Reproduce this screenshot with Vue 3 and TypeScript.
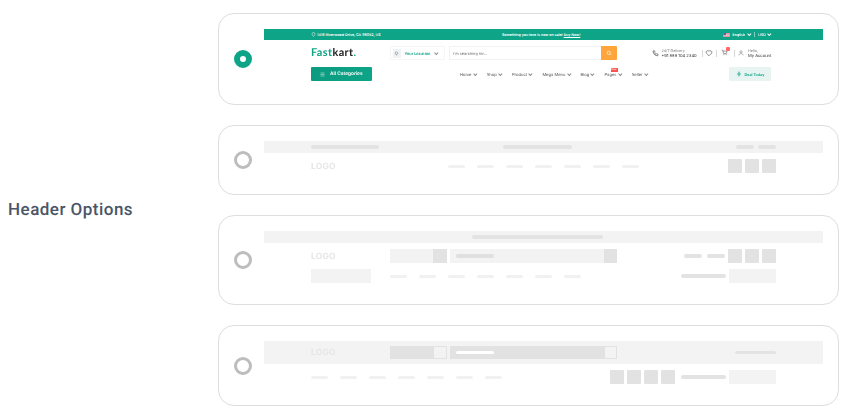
<script setup lang="ts">
const navItems: string[] = ['Home', 'Shop', 'Product', 'Mega Menu', 'Blog', 'Pages', 'Seller']
const lines: number[] = [1, 2, 3, 4, 5, 6, 7]
</script>

<template>
  <main class="page">
    <h2 class="label">Header Options</h2>
    <div class="cards">
      <section class="card">
        <span class="radio radio-on"></span>
        <div class="preview preview-live">
          <div class="live-bar">
            <span class="address">
              <svg class="ic-pin" viewBox="0 0 10 10"><path d="M5 1a3 3 0 0 1 3 3c0 2-3 5-3 5S2 6 2 4a3 3 0 0 1 3-3z" fill="none" stroke="#fff" stroke-width="1"/></svg>
              1418 Riverwood Drive, CA 96052, US
            </span>
            <span class="promo">Something you love is now on sale! <u>Buy Now!</u></span>
            <span class="locale">
              <svg class="flag" viewBox="0 0 8 5"><rect width="8" height="5" fill="#e8e8f0"/><path d="M0 .5h8M0 2.5h8M0 4.5h8" stroke="#e2526a" stroke-width=".8"/><rect width="3.4" height="2.6" fill="#5a64a8"/></svg>
              English <i class="chev chev-w"></i><b class="locale-sep"></b>USD <i class="chev chev-w"></i>
            </span>
          </div>
          <div class="live-main">
            <span class="brand"><em>Fast</em>kart<em>.</em></span>
            <div class="location">
              <span class="loc-ic"><svg viewBox="0 0 10 10"><circle cx="5" cy="4.5" r="2.6" fill="none" stroke="#7a8090" stroke-width="1.2"/><path d="M5 7v2" stroke="#7a8090"/></svg></span>
              <span class="loc-text">Your Location</span>
              <i class="chev"></i>
            </div>
            <div class="search">
              <span class="search-text">I'm searching for...</span>
              <span class="search-btn"><svg viewBox="0 0 10 10"><circle cx="4.6" cy="4.6" r="2.7" fill="none" stroke="#fff" stroke-width="1"/><path d="M6.6 6.6l1.8 1.8" stroke="#fff"/></svg></span>
            </div>
            <div class="tools">
              <svg class="ic-phone" viewBox="0 0 10 10"><path d="M1.5 1.5l2-.5 1 2.2-1 .8c.4 1 1.2 1.8 2.2 2.2l.8-1 2.2 1-.5 2C4.500 8.500 1.500 5.500 1.500 1.500z" fill="none" stroke="#444" stroke-width=".9"/></svg>
              <span class="two-line phone-text"><small>24/7 Delivery</small><span>+91 888 104 2340</span></span>
              <b class="sep sep-a"></b>
              <svg class="ic-heart" viewBox="0 0 10 10"><path d="M5 8.500L1.500 5A2.100 2.100 0 0 1 5 2.800 2.100 2.100 0 0 1 8.500 5z" fill="none" stroke="#555" stroke-width=".8"/></svg>
              <b class="sep sep-b"></b>
              <span class="cart">
                <svg viewBox="0 0 10 10"><path d="M1 1.500h1.500l1.200 5h4l1-3.500H3" fill="none" stroke="#555" stroke-width=".8"/><circle cx="4.200" cy="8.300" r=".7" fill="#555"/><circle cx="7.300" cy="8.300" r=".7" fill="#555"/></svg>
                <i class="cart-badge"></i>
              </span>
              <b class="sep sep-c"></b>
              <svg class="ic-user" viewBox="0 0 10 10"><circle cx="5" cy="3.200" r="1.900" fill="none" stroke="#666" stroke-width=".8"/><path d="M1.500 9c.3-2 1.700-3 3.500-3s3.200 1 3.500 3" fill="none" stroke="#666" stroke-width=".8"/></svg>
              <span class="two-line account"><small>Hello,</small><span>My Account</span></span>
            </div>
          </div>
          <div class="live-nav">
            <span class="all-cats">
              <svg viewBox="0 0 10 10"><path d="M1 2h8M1 5h8M1 8h8" stroke="#d9f1ec" stroke-width="1"/></svg>
              All Categories
            </span>
            <nav class="nav">
              <span v-for="item in navItems" :key="item" class="nav-item">
                {{ item }} <i class="chev"></i>
                <i v-if="item === 'Pages'" class="new">New</i>
              </span>
            </nav>
            <span class="deal">
              <svg viewBox="0 0 10 10"><path d="M5 .500v9M1.500 5h7M5 2l-2 3 2 3 2-3z" fill="none" stroke="#0da487" stroke-width=".8"/></svg>
              Deal Today
            </span>
          </div>
        </div>
      </section>

      <section class="card">
        <span class="radio"></span>
        <div class="preview">
          <div class="bar">
            <i class="line w68"></i>
            <i class="line w69 mid-2"></i>
            <i class="line w18 push"></i>
            <i class="line w18 g4"></i>
          </div>
          <div class="row row-first">
            <span class="logo">LOGO</span>
            <div class="nav-lines nav-2"><i v-for="n in lines" :key="n" class="nl"></i></div>
            <div class="squares push"><i class="sq"></i><i class="sq"></i><i class="sq"></i></div>
          </div>
        </div>
      </section>

      <section class="card">
        <span class="radio"></span>
        <div class="preview">
          <div class="bar bar-center"><i class="line w131"></i></div>
          <div class="row row-first">
            <span class="logo logo-col">LOGO</span>
            <div class="sk-search">
              <span class="sk-left"></span><span class="sk-tag"></span>
              <span class="sk-input"><i class="line line-soft w38"></i></span><span class="sk-tag"></span>
            </div>
            <i class="line w18 push"></i>
            <i class="line w18 g5"></i>
            <div class="squares g3"><i class="sq"></i><i class="sq"></i><i class="sq"></i></div>
          </div>
          <div class="row row-next">
            <span class="box box-60"></span>
            <div class="nav-lines nav-3"><i v-for="n in lines" :key="n" class="nl"></i></div>
            <i class="line w45 push"></i>
            <span class="box box-47 g3"></span>
          </div>
        </div>
      </section>

      <section class="card">
        <span class="radio"></span>
        <div class="preview">
          <div class="bar bar-tall">
            <span class="logo logo-col">LOGO</span>
            <div class="sk-search sk-dark">
              <span class="sk-left"></span><span class="sk-tag"></span>
              <span class="sk-input"><i class="line line-white w38"></i></span><span class="sk-tag"></span>
            </div>
            <i class="line w41 push"></i>
          </div>
          <div class="row row-next">
            <div class="nav-lines"><i v-for="n in lines" :key="n" class="nl"></i></div>
            <div class="squares push"><i class="sq"></i><i class="sq"></i><i class="sq"></i><i class="sq"></i></div>
            <i class="line w45 g6"></i>
            <span class="box box-47 g3"></span>
          </div>
        </div>
      </section>
    </div>
  </main>
</template>

<style scoped>
.page {
  width: 849px;
  height: 417px;
  box-sizing: border-box;
  padding: 13px 10px 0 8px;
  display: flex;
  align-items: flex-start;
  font-family: Inter, "Liberation Sans", sans-serif;
  background: #fff;
  text-rendering: geometricPrecision;
}
.label {
  width: 210px;
  margin: 187px 0 0;
  font: 500 17px/20px Roboto, "Liberation Sans", sans-serif;
  letter-spacing: .48px;
  color: #4a5568;
}
.cards { width: 621px; display: flex; flex-direction: column; gap: 20px; }
.card {
  box-sizing: border-box;
  display: flex;
  align-items: center;
  gap: 12px;
  padding: 15px;
  border: 1px solid #dedede;
  border-radius: 16px;
  background: #fff;
}
.radio {
  flex: none;
  box-sizing: border-box;
  width: 18px;
  height: 18px;
  border-radius: 50%;
  border: 3.5px solid #bdbdbd;
  background: #fff;
}
.radio-on { border: 6px solid #0da487; }
.preview { width: 559px; flex: none; padding-bottom: 6px; filter: blur(.3px); }
.preview-live { padding-bottom: 8px; }

/* live header */
.live-bar {
  height: 11px;
  background: #0da487;
  padding: 0 52px 0 47px;
  display: flex;
  align-items: center;
  color: #fff;
  font-size: 3.6px;
  font-weight: 600;
  white-space: nowrap;
}
.address { width: 191px; display: flex; align-items: center; gap: 1px; }
.ic-pin { width: 5px; height: 5px; }
.promo { flex: none; }
.locale { margin-left: auto; display: flex; align-items: center; gap: 1.500px; }
.flag { width: 7px; height: 4px; margin-right: 1px; }
.locale-sep { width: 1px; height: 5px; background: #7fd0c0; margin: 0 2px; }
.chev {
  display: inline-block;
  width: 1.600px;
  height: 1.600px;
  border: solid #888;
  border-width: 0 .4px .4px 0;
  transform: translateY(-.6px) rotate(45deg);
  margin-left: 1px;
}
.chev-w { border-color: #fff; }
.live-main {
  margin-top: 6px;
  height: 14px;
  padding: 0 52px 0 47px;
  display: flex;
  align-items: center;
  white-space: nowrap;
}
.brand {
  width: 79px;
  font: 700 10.900px/14px Lato, Inter, sans-serif;
  letter-spacing: .4px;
  color: #222;
}
.brand em { font-style: normal; color: #0da487; }
.location {
  box-sizing: border-box;
  width: 55px;
  height: 14px;
  border: 1px solid #f6f6f6;
  display: flex;
  align-items: center;
  padding-left: 1.500px;
}
.loc-ic {
  width: 8px;
  height: 9px;
  background: #f0f2f6;
  display: flex;
  align-items: center;
  justify-content: center;
}
.loc-ic svg { width: 5px; height: 5px; }
.loc-text { margin-left: 4px; color: #0da487; font-size: 3.9px; font-weight: 600; }
.location .chev { margin-left: 5px; }
.search {
  box-sizing: border-box;
  margin-left: 4px;
  width: 168px;
  height: 14px;
  border: 1px solid #f2f2f2;
  border-right: 0;
  display: flex;
  align-items: center;
  justify-content: space-between;
  font-size: 3.9px;
  color: #777;
}
.search-text { margin-left: 3px; }
.search-btn {
  width: 16px;
  height: 14px;
  background: #ffa53b;
  border-radius: 0 1px 1px 0;
  display: flex;
  align-items: center;
  justify-content: center;
}
.search-btn svg { width: 6px; height: 6px; }
.tools { margin-left: auto; display: flex; align-items: center; }
.ic-phone { width: 7px; height: 7px; }
.two-line {
  display: flex;
  flex-direction: column;
  font-size: 4.100px;
  line-height: 5.500px;
  color: #333;
  margin-left: 3px;
}
.two-line small { font-size: 3.700px; color: #777; }
.phone-text { width: 35px; }
.sep { width: 1px; height: 7px; background: #d8d8d8; }
.sep-a { margin-left: 5px; }
.ic-heart { width: 8px; height: 8px; margin-left: 2.500px; }
.sep-b { margin-left: 3px; }
.cart { position: relative; width: 8px; height: 8px; margin-left: 4px; }
.cart svg { display: block; width: 7px; height: 7px; }
.cart-badge {
  position: absolute;
  right: -1px;
  top: -2.500px;
  width: 4px;
  height: 4px;
  background: #ff6b6b;
  border-radius: 1px;
}
.sep-c { margin-left: 5px; }
.ic-user { width: 6px; height: 6px; margin-left: 3px; }
.account { width: 23px; margin-left: 4px; }
.live-nav {
  margin-top: 7px;
  height: 14px;
  padding: 0 52px 0 47px;
  display: flex;
  align-items: center;
  white-space: nowrap;
}
.all-cats {
  width: 61px;
  height: 14.500px;
  flex: none;
  box-sizing: border-box;
  padding-left: 9px;
  background: linear-gradient(90deg, #0c9b80, #0da487);
  border-radius: 1px;
  color: #fff;
  font-size: 4.800px;
  font-weight: 600;
  display: flex;
  align-items: center;
  gap: 5px;
}
.all-cats svg { width: 5px; height: 5px; }
.nav {
  margin-left: 88px;
  display: flex;
  gap: 10.500px;
  font-size: 4.100px;
  font-weight: 400;
  color: #555;
}
.nav-item { position: relative; }
.new {
  position: absolute;
  left: 6px;
  top: -4px;
  width: 7px;
  height: 4.500px;
  background: #ff4f4f;
  color: #fff;
  font-size: 2.500px;
  line-height: 4.500px;
  text-align: center;
  font-style: normal;
}
.deal {
  margin-left: auto;
  width: 42px;
  height: 14.500px;
  box-sizing: border-box;
  padding-left: 6.500px;
  background: #e8f4f2;
  border-radius: 1px;
  color: #0da487;
  font-size: 3.700px;
  font-weight: 600;
  display: flex;
  align-items: center;
  gap: 3px;
}
.deal svg { width: 6px; height: 6px; }

/* skeletons */
.bar, .row { display: flex; align-items: center; padding: 0 47px; }
.bar { height: 12px; background: #f3f3f3; }
.bar-center { padding-left: 208px; }
.bar-tall { height: 23px; }
.row { height: 14px; }
.row-first, .row-next { margin-top: 6px; }
.push { margin-left: auto; }
.line {
  display: block;
  flex: none;
  height: 3.500px;
  border-radius: 2px;
  background: #e3e3e3;
}
.line-soft { background: #e0e0e0; }
.line-white { background: #fff; }
.w18 { width: 18px; }
.w38 { width: 38px; }
.w41 { width: 41px; }
.w45 { width: 45px; }
.w68 { width: 68px; }
.w69 { width: 69px; }
.w131 { width: 131px; }
.mid-2 { margin-left: 124px; }
.g3 { margin-left: 3px; }
.g4 { margin-left: 4px; }
.g5 { margin-left: 5px; }
.g6 { margin-left: 6px; }
.logo {
  flex: none;
  padding-top: 1px;
  font: 700 8.500px/12px Inter, sans-serif;
  letter-spacing: .2px;
  color: #e6e6e6;
}
.logo-col { width: 79px; }
.nav-lines { display: flex; gap: 12px; }
.nav-2 { margin-left: 112px; }
.nav-3 { margin-left: 19px; }
.nl { width: 17px; height: 3px; border-radius: 2px; background: #f1f1f1; }
.squares { display: flex; gap: 3.330px; }
.sq { width: 13.670px; height: 14px; border-radius: 1px; background: #e2e2e2; }
.sk-search { display: flex; height: 13.500px; flex: none; width: 227px; }
.sk-left { width: 43px; background: #f3f3f3; }
.sk-tag { width: 13.500px; background: #e2e2e2; flex: none; }
.sk-input {
  flex: 1;
  margin-left: 3px;
  background: #f3f3f3;
  display: flex;
  align-items: center;
  padding-left: 6px;
}
.sk-dark .sk-left, .sk-dark .sk-input { background: #e2e2e2; }
.sk-dark .sk-tag {
  box-sizing: border-box;
  background: #f3f3f3;
  border: 1px solid #e2e2e2;
}
.box { display: block; height: 14px; background: #f3f3f3; flex: none; }
.box-60 { width: 60px; }
.box-47 { width: 47px; }
</style>

<style>
html, body { margin: 0; background: #fff; }
</style>
